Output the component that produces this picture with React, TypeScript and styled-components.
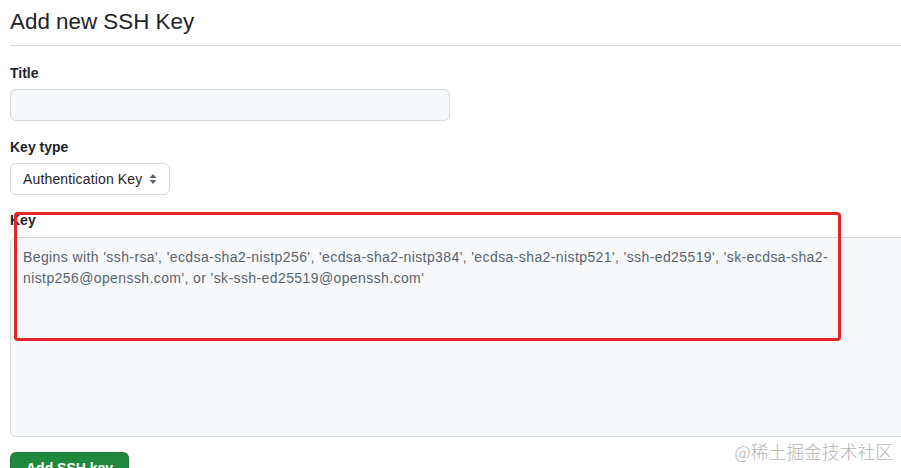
import React from "react";
import styled, { createGlobalStyle } from "styled-components";

const GlobalStyle = createGlobalStyle`
  html, body {
    margin: 0;
    padding: 0;
    background: #ffffff;
    overflow: hidden;
  }
  body {
    font-family: "Liberation Sans", Arial, sans-serif;
    color: #1f2328;
  }
`;

const Page = styled.div`
  position: relative;
  width: 901px;
  height: 468px;
  overflow: hidden;
  padding-left: 10px;
  box-sizing: border-box;
`;

const Subhead = styled.div`
  padding-top: 4px;
  padding-bottom: 5px;
  border-bottom: 1px solid #d8dee4;
  margin-right: -10px;
`;

const Heading = styled.h2`
  margin: 0;
  font-size: 22.4px;
  line-height: 36px;
  font-weight: 400;
  color: #1f2328;
`;

const Form = styled.form`
  display: flex;
  flex-direction: column;
  align-items: flex-start;
  padding-top: 17px;
`;

const Group = styled.div<{ $gap: number }>`
  position: relative;
  display: flex;
  flex-direction: column;
  align-items: flex-start;
  margin-bottom: ${(p) => p.$gap}px;
`;

const Label = styled.label`
  font-size: 14px;
  line-height: 21px;
  font-weight: 700;
  color: #1f2328;
  margin-bottom: 5px;
`;

const TextInput = styled.input`
  box-sizing: border-box;
  width: 440px;
  height: 32px;
  border: 1px solid #d1d9e0;
  border-radius: 6px;
  background: #f6f8fa;
  padding: 0 12px;
  font-family: inherit;
  font-size: 14px;
  outline: none;
`;

const SelectButton = styled.div`
  box-sizing: border-box;
  display: flex;
  align-items: center;
  justify-content: space-between;
  width: 160px;
  height: 32px;
  border: 1px solid #d1d9e0;
  border-radius: 6px;
  background: #ffffff;
  padding: 0 11px 0 12px;
  font-size: 14px;
  letter-spacing: 0.15px;
  color: #1f2328;
`;

const KeyArea = styled.textarea`
  box-sizing: border-box;
  width: 1000px;
  height: 200px;
  margin-top: 1px;
  border: 1px solid #d1d9e0;
  border-radius: 6px;
  background: #f6f8fa;
  padding: 9px 12px;
  font-family: inherit;
  font-size: 14px;
  line-height: 21px;
  letter-spacing: 0.4px;
  resize: none;
  outline: none;
  white-space: pre;
  &::placeholder {
    color: #59636e;
    opacity: 1;
  }
`;

const Highlight = styled.div`
  position: absolute;
  left: 4px;
  top: 2px;
  width: 827px;
  height: 129px;
  box-sizing: border-box;
  border: 3px solid #e4262b;
  border-radius: 4px;
  pointer-events: none;
`;

const SubmitButton = styled.button`
  box-sizing: border-box;
  height: 32px;
  padding: 0 15px;
  border: 1px solid rgba(31, 35, 40, 0.15);
  border-radius: 6px;
  background: #1f883d;
  color: #ffffff;
  font-family: inherit;
  font-size: 14px;
  font-weight: 700;
  line-height: 30px;
`;

const Watermark = styled.div`
  position: absolute;
  right: 8px;
  top: 439px;
  font-family: "Noto Sans CJK SC", sans-serif;
  font-size: 17.8px;
  line-height: 24px;
  color: #b4b4b4;
  font-weight: 300;
`;

const SortIcon = () => (
  <svg width="10" height="12" viewBox="0 0 10 12" aria-hidden="true">
    <path d="M5 1 L8.5 5 H1.5 Z" fill="#59636e" />
    <path d="M5 11 L8.5 7 H1.5 Z" fill="#59636e" />
  </svg>
);

const placeholder =
  "Begins with 'ssh-rsa', 'ecdsa-sha2-nistp256', 'ecdsa-sha2-nistp384', 'ecdsa-sha2-nistp521', 'ssh-ed25519', 'sk-ecdsa-sha2-\nnistp256@openssh.com', or 'sk-ssh-ed25519@openssh.com'";

export default function App() {
  return (
    <>
      <GlobalStyle />
      <Page>
        <Subhead>
          <Heading>Add new SSH Key</Heading>
        </Subhead>
        <Form onSubmit={(e) => e.preventDefault()}>
          <Group $gap={16}>
            <Label>Title</Label>
            <TextInput type="text" />
          </Group>
          <Group $gap={15}>
            <Label>Key type</Label>
            <SelectButton>
              <span>Authentication Key</span>
              <SortIcon />
            </SelectButton>
          </Group>
          <Group $gap={15}>
            <Label>Key</Label>
            <KeyArea placeholder={placeholder} />
            <Highlight />
          </Group>
          <SubmitButton type="submit">Add SSH key</SubmitButton>
        </Form>
        <Watermark>@稀土掘金技术社区</Watermark>
      </Page>
    </>
  );
}
